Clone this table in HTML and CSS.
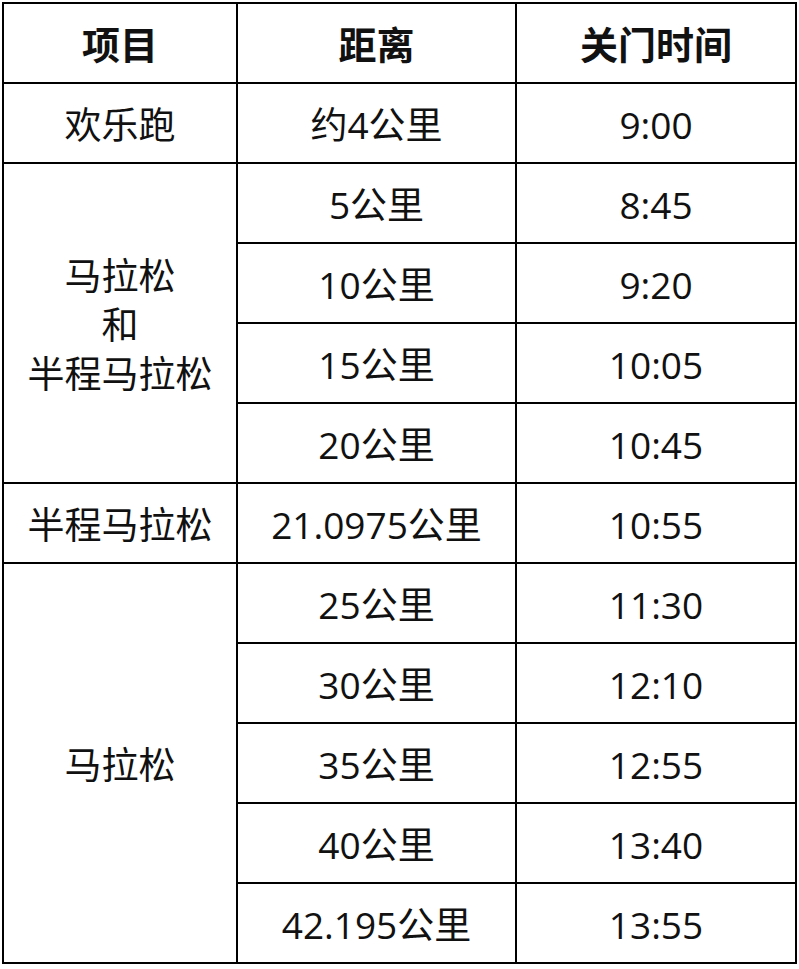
FILE: index.html
```html
<!DOCTYPE html>
<html lang="zh-CN">
<head>
<meta charset="utf-8">
<link rel="stylesheet" href="styles.css">
</head>
<body>
<table class="tbl">
  <colgroup>
    <col class="c1"><col class="c2"><col class="c3">
  </colgroup>
  <thead>
    <tr><th>项目</th><th>距离</th><th>关门时间</th></tr>
  </thead>
  <tbody>
    <tr><td>欢乐跑</td><td>约4公里</td><td>9:00</td></tr>
    <tr><td rowspan="4" class="multi">马拉松<br>和<br>半程马拉松</td><td>5公里</td><td>8:45</td></tr>
    <tr><td>10公里</td><td>9:20</td></tr>
    <tr><td>15公里</td><td>10:05</td></tr>
    <tr><td>20公里</td><td>10:45</td></tr>
    <tr><td>半程马拉松</td><td>21.0975公里</td><td>10:55</td></tr>
    <tr><td rowspan="5">马拉松</td><td>25公里</td><td>11:30</td></tr>
    <tr><td>30公里</td><td>12:10</td></tr>
    <tr><td>35公里</td><td>12:55</td></tr>
    <tr><td>40公里</td><td>13:40</td></tr>
    <tr><td>42.195公里</td><td>13:55</td></tr>
  </tbody>
</table>
</body>
</html>
```
FILE: styles.css
```css
html, body {
  margin: 0;
  padding: 0;
  background: #fff;
}
body {
  padding: 2px 0 0 2px;
  font-family: "Open Sans", "Noto Sans CJK SC", sans-serif;
  color: #111;
}
.tbl {
  border-collapse: collapse;
  table-layout: fixed;
  width: 795px;
}
.c1 { width: 234px; }
.c2 { width: 279px; }
.c3 { width: 280px; }
.tbl th, .tbl td {
  border: 2px solid #000;
  height: 76px;
  padding: 2px 0 0 0;
  text-align: center;
  vertical-align: middle;
  font-size: 37px;
  line-height: 1;
}
.tbl th {
  font-weight: 700;
  font-size: 38px;
}
.tbl td {
  font-weight: 400;
}
.tbl td.multi {
  line-height: 49px;
}
```
